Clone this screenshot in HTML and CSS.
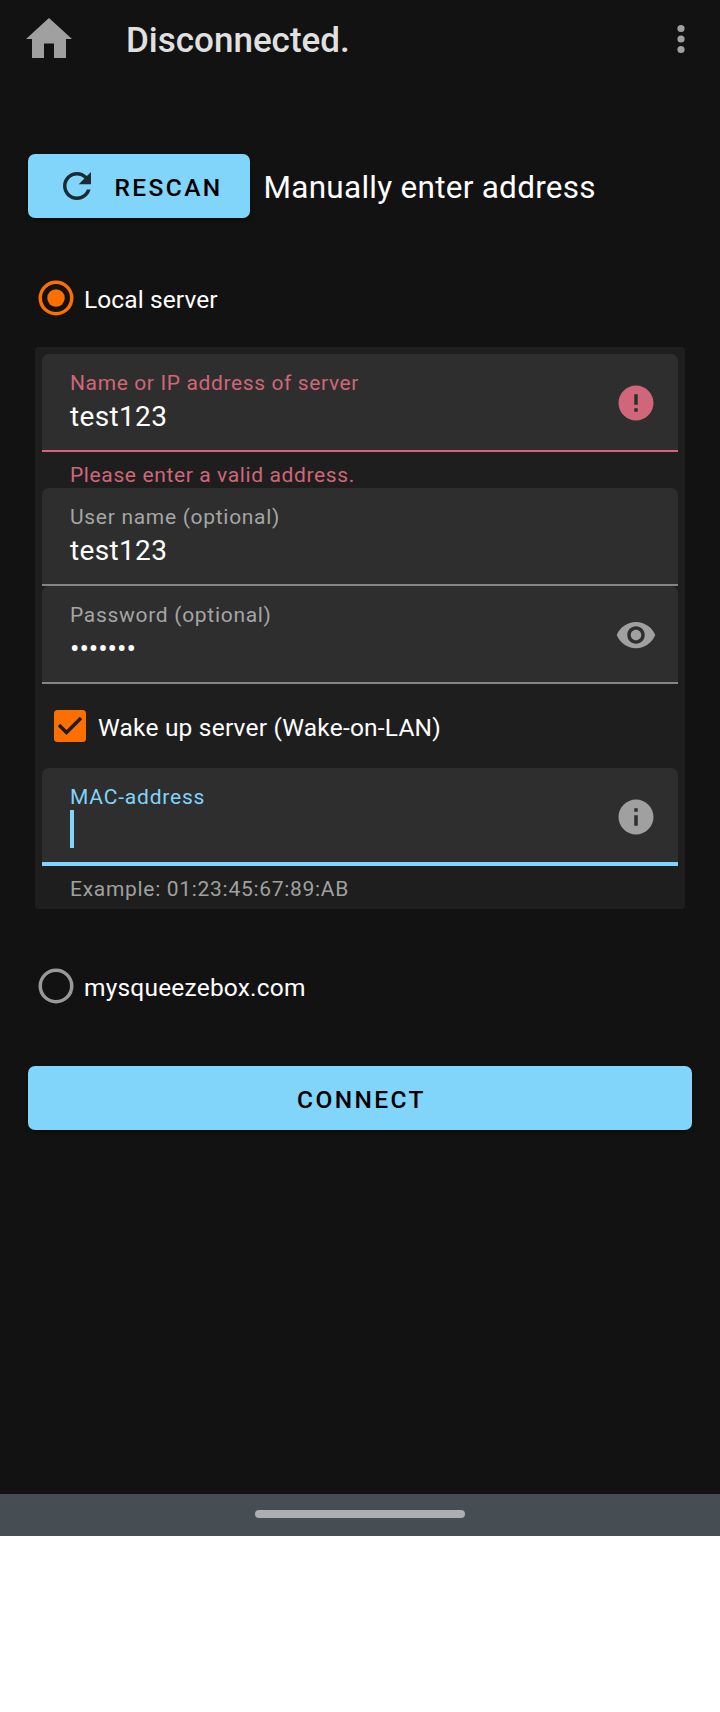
FILE: index.html
```html
<!DOCTYPE html>
<html lang="en">
<head>
<meta charset="utf-8">
<title>Disconnected</title>
<link rel="stylesheet" href="styles.css">
</head>
<body>
<div class="screen">
  <header class="app-bar">
    <svg class="home" viewBox="0 0 46 40"><path d="M23 0 46 21H40V40H28V25.500H18V40H6V21H0Z"/></svg>
    <h1 class="title">Disconnected.</h1>
    <svg class="more" viewBox="0 0 8 30"><circle cx="4" cy="4.500" r="3.600"/><circle cx="4" cy="15" r="3.600"/><circle cx="4" cy="25.500" r="3.600"/></svg>
  </header>

  <main class="content">
    <div class="scan-row">
      <button class="button rescan">
        <svg class="icon refresh" viewBox="0 0 24 24"><path d="M17.650 6.350C16.200 4.900 14.210 4 12 4c-4.420 0-7.990 3.580-7.990 8s3.570 8 7.990 8c3.730 0 6.840-2.550 7.730-6h-2.080c-.82 2.330-3.040 4-5.650 4-3.310 0-6-2.690-6-6s2.690-6 6-6c1.660 0 3.140.69 4.220 1.780L13 11h7V4l-2.350 2.350z"/></svg>
        <span class="text">RESCAN</span>
      </button>
      <span class="manual">Manually enter address</span>
    </div>

    <div class="option local">
      <svg class="icon radio-on" viewBox="0 0 24 24"><circle class="ring" cx="12" cy="12" r="9"/><circle class="dot" cx="12" cy="12" r="5"/></svg>
      <span class="text">Local server</span>
    </div>

    <section class="card">
      <div class="field error">
        <div class="entry">
          <div class="label">Name or IP address of server</div>
          <div class="value">test123</div>
        </div>
        <svg class="icon" viewBox="0 0 24 24"><path d="M12 2C6.480 2 2 6.480 2 12s4.480 10 10 10 10-4.480 10-10S17.520 2 12 2zm1 15h-2v-2h2v2zm0-4h-2V7h2v6z"/></svg>
      </div>
      <div class="helper invalid">Please enter a valid address.</div>

      <div class="field">
        <div class="entry">
          <div class="label">User name (optional)</div>
          <div class="value">test123</div>
        </div>
      </div>

      <div class="field">
        <div class="entry">
          <div class="label">Password (optional)</div>
          <div class="value password">•••••••</div>
        </div>
        <svg class="icon" viewBox="0 0 24 24"><path d="M12 4.500C7 4.500 2.730 7.610 1 12c1.730 4.390 6 7.500 11 7.500s9.270-3.110 11-7.500c-1.730-4.390-6-7.500-11-7.500zM12 17c-2.760 0-5-2.240-5-5s2.240-5 5-5 5 2.240 5 5-2.240 5-5 5zm0-8c-1.660 0-3 1.340-3 3s1.340 3 3 3 3-1.340 3-3-1.340-3-3-3z"/></svg>
      </div>

      <div class="option wake">
        <svg class="checkbox" viewBox="0 0 32 32"><rect width="32" height="32" rx="3.500"/><path d="M5 15 12.500 22.500 27 8"/></svg>
        <span class="text">Wake up server (Wake-on-LAN)</span>
      </div>

      <div class="field focused">
        <div class="entry">
          <div class="label">MAC-address</div>
          <div class="caret"></div>
        </div>
        <svg class="icon" viewBox="0 0 24 24"><path d="M12 2C6.480 2 2 6.480 2 12s4.480 10 10 10 10-4.480 10-10S17.520 2 12 2zm1 15h-2v-6h2v6zm0-8h-2V7h2v2z"/></svg>
      </div>
      <div class="helper">Example: 01:23:45:67:89:AB</div>
    </section>

    <div class="option remote">
      <svg class="icon radio-off" viewBox="0 0 24 24"><circle class="ring" cx="12" cy="12" r="9"/></svg>
      <span class="text">mysqueezebox.com</span>
    </div>

    <button class="button connect"><span class="text">CONNECT</span></button>
  </main>

  <footer class="nav-bar"><div class="pill"></div></footer>
</div>
</body>
</html>
```
FILE: styles.css
```css
* { box-sizing: border-box; }

body {
  margin: 0;
  background: #fff;
  font-family: Roboto, sans-serif;
  color: #fff;
}

svg { display: block; flex: none; }

.screen {
  display: flex;
  flex-direction: column;
  width: 720px;
  height: 1536px;
  background: #121212;
}

.app-bar {
  display: flex;
  align-items: center;
  height: 80px;
  padding: 0 35px 0 26px;
}
.home { width: 46px; height: 40px; margin-top: -4px; fill: #a0a0a0; }
.title {
  flex: 1;
  margin: 2px 0 0 54px;
  font-size: 35px;
  font-weight: 500;
  line-height: 42px;
  color: #e0e0e0;
}
.more { width: 8px; height: 30px; margin-top: -2px; fill: #a0a0a0; }

.content {
  flex: 1;
  display: flex;
  flex-direction: column;
  padding: 74px 28px 0;
}

.scan-row { display: flex; align-items: center; gap: 13.5px; height: 64px; }
.manual { padding-top: 3px; font-size: 31.5px; line-height: 38px; letter-spacing: .27px; }

.button {
  display: flex;
  align-items: center;
  justify-content: center;
  height: 64px;
  padding: 0;
  border: 0;
  border-radius: 7px;
  background: #81d4fa;
  color: #000;
  font: 500 24.5px/30px Roboto, sans-serif;
  letter-spacing: 2.4px;
  box-shadow: 0 2px 4px rgba(0, 0, 0, .4);
}
.button .text { padding-top: 3px; }
.rescan { width: 222px; justify-content: flex-start; padding-left: 28px; gap: 16.5px; }
.refresh { fill: #1b2b32; }

.icon { width: 42px; height: 42px; }

.option {
  display: flex;
  align-items: center;
  height: 42px;
  font-size: 24.5px;
  line-height: 30px;
  letter-spacing: .2px;
}
.option .text { padding-top: 3px; }
.local { margin: 59px 0 28px 7px; gap: 7px; letter-spacing: .1px; }
.remote { margin: 56px 0 0 7px; gap: 7px; }
.ring { fill: none; stroke-width: 2; }
.radio-on .ring { stroke: #ff6f00; }
.radio-on .dot { fill: #ff6f00; }
.radio-off .ring { stroke: #999; }

.card {
  height: 562px;
  margin: 0 7px;
  padding: 7px;
  border-radius: 3.500px;
  background: #1e1e1e;
}

.field {
  display: flex;
  justify-content: space-between;
  height: 98px;
  padding: 17px 21px 0 28px;
  border-bottom: 2px solid #868686;
  border-radius: 7px 7px 0 0;
  background: #2e2e2e;
}
.field .icon { margin-top: 11px; fill: #a0a0a0; }
.label {
  font-size: 21px;
  line-height: 24px;
  letter-spacing: .7px;
  color: #a5a5a5;
}
.value { margin-top: 6px; font-size: 28px; line-height: 32px; letter-spacing: .35px; }
.password { letter-spacing: -.05px; }

.error { border-bottom-color: #cf6679; }
.error .label, .invalid.helper { color: #cf6679; letter-spacing: .62px; }
.error .icon { fill: #cf6679; }

.focused { border-bottom: 4px solid #81d4fa; }
.focused .label { color: #81d4fa; letter-spacing: .8px; }
.caret { width: 4px; height: 38px; margin-top: 1px; background: #81d4fa; }

.helper {
  height: 36px;
  padding: 11px 28px 0;
  font-size: 21px;
  line-height: 24px;
  letter-spacing: .7px;
  color: #a0a0a0;
}

.wake { height: 84px; padding-left: 12px; gap: 12px; }
.checkbox { width: 32px; height: 32px; }
.checkbox rect { fill: #ff6f00; }
.checkbox path { fill: none; stroke: #1e1e1e; stroke-width: 3.500; }

.connect { margin-top: 59px; padding-left: 3px; }

.nav-bar { height: 42px; padding-top: 16px; background: #464e53; }
.pill { width: 210px; height: 8px; margin: 0 auto; border-radius: 4px; background: #abafb2; }
```
